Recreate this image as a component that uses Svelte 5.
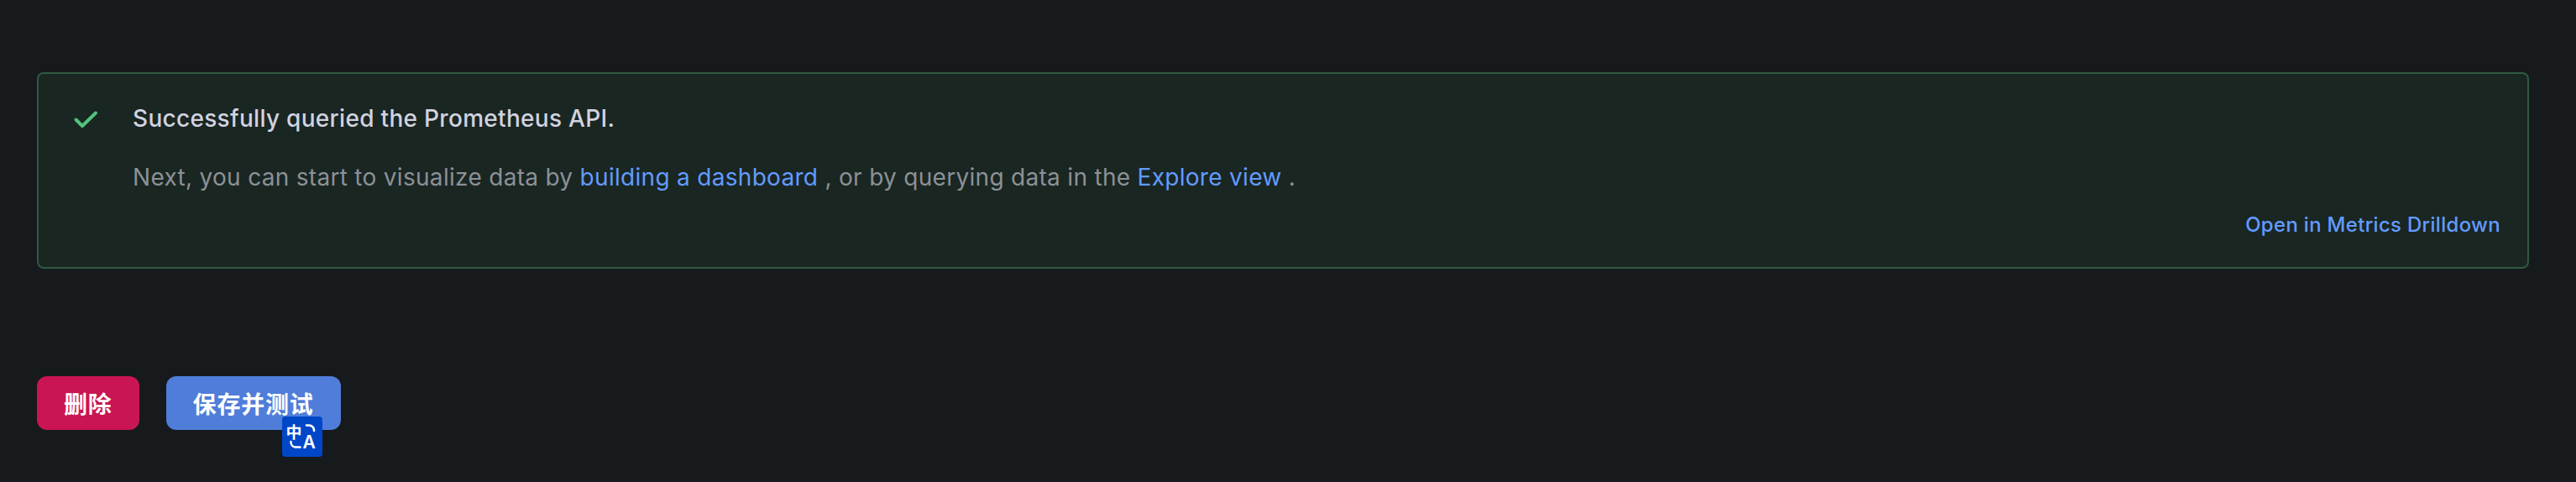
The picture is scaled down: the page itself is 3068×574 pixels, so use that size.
<script lang="ts">
	const dashboardHref = '#dashboard';
	const exploreHref = '#explore';
</script>

<div class="page">
	<div class="alert">
		<div class="alert__icon">
			<svg width="32" height="32" viewBox="0 0 32 32" fill="none" aria-hidden="true">
				<path d="M4.5 12.5 12 20 28 4.5" stroke="#53c07e" stroke-width="4" stroke-linecap="round" stroke-linejoin="round" />
			</svg>
		</div>
		<div class="alert__body">
			<div class="alert__title">Successfully queried the Prometheus API.</div>
			<p class="alert__text">
				Next, you can start to visualize data by
				<a href={dashboardHref}>building a dashboard</a>
				, or by querying data in the
				<a href={exploreHref}>Explore view</a>
				.
			</p>
			<div class="alert__footer">
				<a href="#drilldown" class="alert__action">Open in Metrics Drilldown</a>
			</div>
		</div>
	</div>

	<div class="actions">
		<button class="btn btn--danger">删除</button>
		<div class="save">
			<button class="btn btn--primary">保存并测试</button>
			<span class="translate-badge">
				<svg width="48" height="48" viewBox="0 0 48 48" fill="none" aria-hidden="true">
					<path d="M29 10.5h3a6 6 0 0 1 6 6.5" stroke="#fff" stroke-width="2.6" stroke-linecap="round" />
					<path d="M10.5 30a6 6 0 0 0 5 6.5h6" stroke="#fff" stroke-width="2.6" stroke-linecap="round" />
				</svg>
				<span class="translate-badge__zh">中</span>
				<span class="translate-badge__en">A</span>
			</span>
		</div>
	</div>
</div>

<style>
	:global(body) {
		margin: 0;
		background: #171a1d;
	}

	.page {
		box-sizing: border-box;
		height: 574px;
		padding: 86px 56px 0 44px;
		font-family: Inter, "Noto Sans CJK SC", sans-serif;
		font-size: 28px;
		letter-spacing: 0.3px;
		color: #ccccdc;
	}

	.alert {
		box-sizing: border-box;
		display: flex;
		height: 234px;
		padding: 28px 32px 0 40px;
		gap: 40px;
		background: #192622;
		border: 2px solid #2f5a41;
		border-radius: 8px;
	}

	.alert__icon {
		flex: none;
		height: 32px;
		margin-top: 14px;
	}

	.alert__body {
		flex: 1;
	}

	.alert__title {
		font-weight: 500;
		line-height: 50px;
		color: #d2d2e0;
	}

	.alert__text {
		margin: 20px 0 0;
		line-height: 50px;
		color: #8d9097;
	}

	.alert__text a,
	.alert__action {
		color: #639bff;
		text-decoration: none;
	}

	.alert__footer {
		display: flex;
		justify-content: flex-end;
		margin-top: 14px;
	}

	.alert__action {
		font-size: 24px;
		font-weight: 500;
		line-height: 36px;
	}

	.actions {
		display: flex;
		gap: 32px;
		margin-top: 128px;
	}

	.save {
		position: relative;
	}

	.btn {
		display: block;
		height: 64px;
		padding: 0 32px;
		border: 0;
		border-radius: 12px;
		font: 700 28px Inter, "Noto Sans CJK SC", sans-serif;
		letter-spacing: 0.8px;
		color: #fff;
	}

	.btn--danger {
		background: #c91553;
	}

	.btn--primary {
		background: #4f7dd9;
	}

	.translate-badge {
		position: absolute;
		top: 48px;
		left: 138px;
		width: 48px;
		height: 48px;
		border-radius: 4px;
		background: #0047c8;
	}

	.translate-badge svg {
		display: block;
	}

	.translate-badge__zh,
	.translate-badge__en {
		position: absolute;
		color: #fff;
		letter-spacing: 0;
	}

	.translate-badge__zh {
		left: 5px;
		top: 7px;
		font: 700 19px/22px "Noto Sans CJK SC", sans-serif;
	}

	.translate-badge__en {
		left: 25px;
		top: 21px;
		font: 600 21px/20px Inter, sans-serif;
	}
</style>
